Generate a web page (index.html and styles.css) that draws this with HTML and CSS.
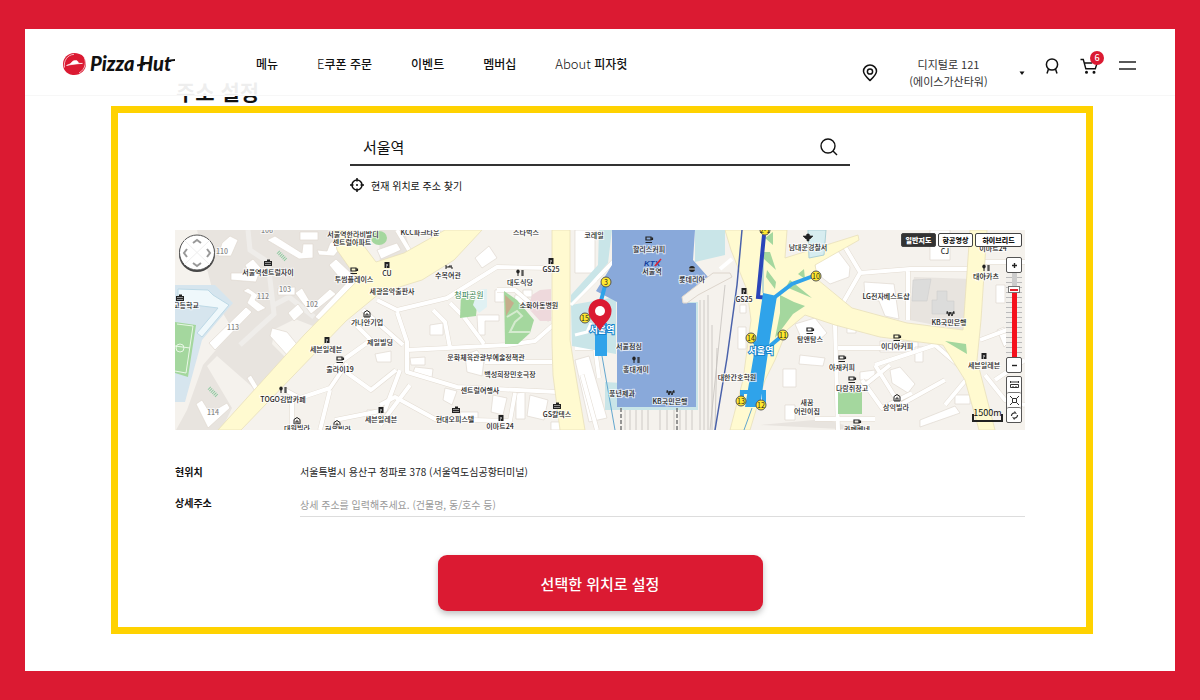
FILE: index.html
```html
<!DOCTYPE html>
<html lang="ko">
<head>
<meta charset="utf-8">
<meta name="viewport" content="width=device-width, initial-scale=1">
<title>주소 설정 - Pizza Hut</title>
<link rel="stylesheet" href="styles.css">
</head>
<body>
<div class="page">
  <header class="header">
    <a class="logo" href="#" aria-label="Pizza Hut">
      <svg width="114" height="26" viewBox="0 0 114 26">
        <path d="M12 2C6 2 1 7 1 13c0 2 .4 4 1.500 6C5 23 9 24 12 24c7 0 12-5 12-11 0-2-1-5-2-7C19 3 16 2 12 2Z" fill="#db1a32"/>
        <path d="M2.500 16.500C1.500 10 5 4 12 3.300M21 4c4 6 3 14-4 18" fill="none" stroke="#fff" stroke-width=".7"/>
        <path d="M4.500 14.500c2.500-1 4-1.500 5.500-3.500 1-1.200 2.200-1.400 3.800-1.400 1.400 0 1.900.6 2.300 1.700.5 1 2 1.300 4.400 1.100-4.500.3-10 .8-16 2.100Z" fill="#fff" stroke="#fff" stroke-width=".6"/>
        <text class="wordmark" x="28" y="20">Pizza Hut</text>
        <path d="M75 14.500l8-1.500M104 10.500c3-1 6-1.500 9-1.500" fill="none" stroke="#111" stroke-width="1.800"/>
      </svg>
    </a>
    <nav class="nav">
      <a href="#">메뉴</a>
      <a href="#"><span class="thin">E</span>쿠폰 주문</a>
      <a href="#">이벤트</a>
      <a href="#">멤버십</a>
      <a href="#"><span class="thin">About</span> 피자헛</a>
    </nav>
    <div class="tools">
      <button class="location" type="button">
        <svg width="16" height="18" viewBox="0 0 16 18" fill="none" stroke="#111" stroke-width="1.500"><path d="M8 16.500C4.500 13.200 1.500 10.500 1.500 7.300a6.500 6.300 0 0 1 13 0c0 3.200-3 5.900-6.500 9.200Z"/><circle cx="8" cy="7.500" r="2.600"/></svg>
        <span class="location-text">디지털로 121<br>(에이스가산타워)</span>
        <svg width="6" height="4" viewBox="0 0 6 4"><path d="M.5.5h5L3 4Z" fill="#111"/></svg>
      </button>
      <button class="icon-button" type="button" aria-label="내 정보">
        <svg width="14" height="18" viewBox="0 0 14 18" fill="none" stroke="#111" stroke-width="1.500"><circle cx="7" cy="7.500" r="5.600"/><path d="M3.500 12 2 16.500M10.500 12l1.500 4.500"/></svg>
      </button>
      <button class="icon-button cart" type="button" aria-label="장바구니">
        <svg width="18" height="18" viewBox="0 0 18 18" fill="none" stroke="#111" stroke-width="1.400"><path d="M.5 2.500h2.800l2.500 9.300h9.500l1.900-6M4.300 6h8"/><circle cx="6.500" cy="15.300" r=".8" fill="#111"/><circle cx="14" cy="15.300" r=".8" fill="#111"/></svg>
        <span class="badge">6</span>
      </button>
      <button class="icon-button" type="button" aria-label="전체 메뉴">
        <svg width="17" height="18" viewBox="0 0 17 18"><path d="M0 5h17M0 12h17" stroke="#222" stroke-width="1.600"/></svg>
      </button>
    </div>
  </header>

  <main class="main">
    <h1 class="title">주소 설정</h1>
    <section class="panel">
      <form class="search">
        <div class="search-row">
          <input class="search-input" type="text" value="서울역" aria-label="주소 검색">
          <button class="icon-button" type="button" aria-label="검색">
            <svg width="18" height="18" viewBox="0 0 18 18" fill="none" stroke="#111" stroke-width="1.400"><circle cx="8" cy="8" r="7"/><path d="m13 13 4 4"/></svg>
          </button>
        </div>
        <button class="locate" type="button">
          <svg width="14" height="14" viewBox="0 0 14 14" fill="none" stroke="#111" stroke-width="1.500"><circle cx="7" cy="7" r="5"/><path d="M7 0v3.500M7 10.500V14M0 7h3.500M10.500 7H14"/><circle cx="7" cy="7" r="1" fill="#111" stroke="none"/></svg>
          현재 위치로 주소 찾기
        </button>
      </form>

      <div class="map">
        <svg class="map-canvas" viewBox="0 0 850 200" preserveAspectRatio="xMidYMid slice" role="img" aria-label="서울역 지도">
          <defs>
            <g id="cup"><path d="M-3-3h5v3h-5ZM2-2h1.500v1.500H2M-3.500 2.500h6.500" fill="none" stroke="#222" stroke-width="1.200"/></g>
            <g id="shop"><path d="M-2.500-3h5v6h-5Z" fill="#222"/><path d="M-1 0h2M-1 2h1" stroke="#fff"/></g>
            <g id="food"><path d="M-2-3v6M2-3v6M3-3v6" stroke="#222"/><ellipse cx="-2" cy="-1.500" rx="1.700" ry="2" fill="#222"/></g>
            <g id="home"><path d="M-3 3v-4.500L0-3.500l3 2V3ZM-1 3V0h2v3" fill="none" stroke="#222"/></g>
            <g id="tower"><path d="M-4 3v-5h3v-1.500h3V-2h2v5Z" fill="#222"/><path d="M-3-.5h6M-3 1.500h6" stroke="#fff" stroke-width=".5"/></g>
            <g id="streets" fill="none" stroke-linejoin="round">
              <path d="M202 70l20 10 50-12 50-31 55 1M222 82l10 30v30l50 15 60 3 40 2M232 120l100-5 28-4 17-15h13M258 80l12 12 5 26M275 73l14 14 20 27M322 60h18l35 30M310 132h67M205 175l15-8 40 22 75 2 5-28"/>
              <path d="M188 80l40 35M176 90l20 20-35 25 35 25 25-20M110 160l15 8 30-10 17-25M117 172v28M145 200l10-40M160 190l50-10 15-40M205 195l30-40M222 0l15 25M262 0l8 15"/>
              <path d="M395 75l45-45M400 105l8-2 4-10M400 118h20l4 30M407 145l15 55"/>
              <path d="M665 78l20-35 50-4h60M733 40v50M685 42l-15-25M660 95l3 105M663 118h50l15-10M700 135l60-20 35 30-25 30M700 135l25 40 45-25M690 155l25-20M687 150l20 28 30-15M640 189h60M810 32h40M805 110l40-15M820 150l30-20M810 145l20 25 20 5"/>
            </g>
          </defs>
          <rect width="850" height="200" fill="#f5f2ed"/>

          <g fill="#e8e4df">
            <path d="M22 0h145l22 30-8 25-43 41-18-7-20 10-3 15 15 15-30 32-40-35-10 10 25 42-25 52H0v-28l12-22 16-45 30-35-18-30Z"/>
            <path d="M204 0h25l8 25-32 14Z"/>
            <path d="m739 47 58 2-5 52-58-11Z"/>
            <path d="M585 195l65-6 35 11Z"/>
          </g>
          <path d="M0 55h40l18 18-31 37-17 62H0Z" fill="#d6e5ee"/>
          <path d="m3 59 30 1 5 5 16 10-27 32-5-4 21-25-40-5Z" fill="#eff8fb" stroke="#bdd9e6"/>
          <path d="m0 92 21 3-8 52-13-4Z" fill="#a4d79e"/>
          <path d="m2 94 16 2-7 47-11-2M0 116l15 2" fill="none" stroke="#e9f7e6"/><circle cx="5" cy="118" r="4" fill="none" stroke="#e9f7e6"/>

          <g fill="none" stroke="#efedea" stroke-width="5"><path d="M73 0l2 20 18 12 6 52-34 31M99 75l15-8 25 20"/></g>
          <g fill="#fff" stroke="#e0d9d0" stroke-width=".7">
            <path d="m47 13 8-7 8 4-7 16H43ZM56 50v-7h18l-4-8 8-6 8 9-5 14ZM73 58l10 7-3 5 11 8-8 4-11-9 4-8-8-4ZM71 77l6 5-37 38-6-7ZM103 58l17-1v8h-17ZM120 63l7-5 10 17 18-16 6 5-25 20ZM113 83l10-9 6 8-10 9ZM97 98l15 4 13 16-12 8-18-20ZM92 10l8-4 27 17 1-9h10v14l-14 1ZM142 20l10 1 3-8 8-5 4 8-8 10-15-1ZM154 35l7-6 17 16-10 7ZM140 87l35-38 8 6-35 38ZM72 148l4-3 9 15-4 3ZM27 170l8 13 17-10 3 5-22 20-12-24Z"/>
            <path d="M125 2h18v8h-18ZM200 124l16-3v11h-14ZM192 180h14v8h-14ZM180 0l20-3v12l-16-2ZM202 20l20-7 4 7-20 9ZM212 29l11-2-2 8-10 2ZM300 28l14-12 8 12-15 10ZM320 60l9-1v13h-9ZM340 65h8v-5h9v7h-5v7h-13ZM302 85h22v6h-14v14h-7ZM255 95l13-2v12h-13ZM235 128l15-1v8h-14ZM240 137l18 2-1 9-20-3ZM270 158l12 3-5 14-9-5ZM285 182h18v8h-18ZM318 165l14 3-4 17-12-3ZM341 163l9-1v27h-9ZM355 165l18 5-4 20-17-4ZM376 192h14v8h-14ZM400 0h20v43h-20ZM400 130l14-4 18 62-18 4ZM290 125l12-5 7 10-2 16-15-4Z"/>
            <path d="m640 27 20-10 15 20-1 10-19 7-15-12ZM689 52l30 2 5 35-14-3-6-15-14-3ZM755 0h20v30h-20ZM620 94l20-6 12 15-10 9-15-2ZM625 125l25 3-2 8-24-2ZM672 91h9v12h-9ZM705 111l38 1v10h-38ZM740 117h8v15h-8ZM608 139h13v18h-13ZM610 175h10v15h-10ZM715 140l10-3 15 17-7 9-16-10ZM685 142l15-2v10h-15ZM780 165h15v9h-15ZM822 100l7-3 5 15-5 5ZM821 55h9v18h-9ZM745 190l35-14 5 7-40 14ZM563 97h8v22h-8ZM565 75h6v8h-6Z"/>
          </g>
          <g fill="#dcdcdb" stroke="#cfcfcf" stroke-width=".6"><path d="m738 50 18-1-4 22h-15ZM762 61h10v10h7v13h-22V70h5Z"/></g>

          <use href="#streets" class="street-edge"/>
          <use href="#streets" class="street-fill"/>

          <g fill="#fffad0" stroke="#e8dfba" stroke-width=".8">
            <path d="M377 0h18v110l4 25 11 65h-25l-7-55-1-32Z"/>
            <path d="M550 0h62l-2 28 73-23 1 5-44 25 3 15 34 28 55 15 56 7 7-100h17l-6 90-4 40 18 70h-16l-14-50-22-35-63-8-45-12-30-10-18 15-12 30-10 20-15 50h-20l13-50 8-60-4-30-16-40Z"/>
            <path d="m43 200 86-95 54-55-21-30-4-20h19l24 32 28-9L270 0h37l-28 30-32 20-42 13-34 28L66 200Z"/>
          </g>

          <path d="m286 64 11-3 6 3-2 22-16 2Z" fill="#a4d79e"/><path d="m303 60 9-1v18l-8 6-6-8Z" fill="#e0f1f3"/>
          <path d="m329 61 13 9 17 20-4 13-12 11h-13Z" fill="#a4d79e"/><path d="m330 65 9 8-8 13Z" fill="#c5ad8c"/><path d="m332 87 10-6 5 5-7 6-5 10 20 0" fill="none" stroke="#d5ebcf" stroke-width="2"/>
          <path d="m357 65 8-5 11-1v32h-11l-12-13Z" fill="#eed9dc"/>
          <ellipse cx="204" cy="8" rx="8" ry="7" fill="#a4d79e"/>
          <g fill="none" stroke="#8dcaa0" stroke-width="4" stroke-dasharray="1 1"><path d="m103 22 8 8M34 158l8 8"/></g>

          <path d="M396 75l37-42 4-33h-13l-1 35-27 30ZM396 75l45-8v57l-44-8ZM430 152v28h93V72h-12v85ZM520 0h30v25l-30 7Z" fill="#c9e5e8"/>
          <path d="M396 75l25-25M400 105l12-3 4-9" fill="none" stroke="#fff" stroke-width="3"/>
          <g fill="none" stroke="#c4c0bd" stroke-width=".8"><path d="M450 180v20M455 180v20M461 180v20M467 180v20M473 180v20M485 180v20M492 180v20M499 180v20M505 180v20M511 180v20M517 180v20M525 70v130M529 70v130M533 65v135M537 95v105M542 118l-2 82M550 55l-15 145"/></g>
          <path d="M446 178v22M502 178v22" stroke="#777" stroke-width="1.500" stroke-dasharray="4 2"/>
          <path d="M437 0h83l-2 30 15 17-26 20 1 6h13v104h-79V72l-21-11 16-26Z" fill="#89a9da"/>
          <path d="m507 67 31-24h17l2 4-34 18-11 8h-4Z" fill="#f5f2ed" stroke="#ddd5cc"/>
          <path d="m545 39 12-10" stroke="#fff" stroke-width="4"/>
          <path d="M567 0l-5 55-10 73-12 72" fill="none" stroke="#4a62ab" stroke-width="1.500"/>

          <path d="m605 65 14 7 11 4-12 8-18 24 5-25ZM615 50l22 18-26-11ZM623 44l6-5 1 10ZM770 111l21 3 1 10ZM663 162h24v22h-24ZM587 22l8 0 6 18-12-11ZM592 40l9 12-1 7-9-12ZM590 8l8-6 0 13Z" fill="#a4d79e"/>
          <path d="M633 0h18l-2 25-15 3Z" fill="#d7edf0" stroke="#add0d5"/>
          <path d="M588 63V0" stroke="#7dbbd7"/>
          <path d="m589 5-6 62 10 1" fill="none" stroke="#2b45b9" stroke-width="4"/>
          <path d="m588 63 14 3-6 36-11 75h-15l11-65ZM420 93h12v33h-12Z" fill="#2fa3ea"/>
          <path d="m600 67 17-13 24-9M595 116l13-11M567 171v-9h22v12M576 108l10 12M431 52l-8 30" fill="none" stroke="#2fa3ea" stroke-width="4"/>
          <path d="m427 126 13 74M577 178l-8 22" stroke="#62a6ce"/>

          <g class="exits">
            <circle cx="590" cy="0" r="5"/><circle cx="431" cy="52" r="5"/><circle cx="410" cy="88" r="5"/><circle cx="576" cy="108" r="5"/><circle cx="608" cy="105" r="5"/><circle cx="566" cy="171" r="5"/><circle cx="586" cy="175" r="5"/><circle cx="641" cy="46" r="5"/>
          </g>
          <g class="exit-numbers">
            <text x="590" y="3">2-1</text><text x="431" y="55">3</text><text x="410" y="91">15</text><text x="576" y="111">14</text><text x="608" y="108">11</text><text x="566" y="174">13</text><text x="586" y="178">12</text><text x="641" y="49">10</text>
          </g>

          <use href="#tower" x="93" y="33"/><use href="#cup" x="179" y="41"/><use href="#shop" x="212" y="35"/><use href="#home" x="192" y="84"/><use href="#shop" x="152" y="110"/><use href="#cup" x="165" y="130"/><use href="#food" x="108" y="160"/><use href="#home" x="122" y="191"/><use href="#home" x="162" y="194"/><use href="#shop" x="206" y="180"/><use href="#tower" x="281" y="180"/><use href="#shop" x="326" y="188"/><use href="#tower" x="382" y="176"/><use href="#shop" x="376" y="31"/><use href="#food" x="345" y="43"/><use href="#tower" x="5" y="68"/>
          <use href="#cup" x="474" y="10"/><use href="#food" x="461" y="130"/><use href="#shop" x="569" y="61"/><use href="#cup" x="635" y="101"/><use href="#cup" x="722" y="108"/><use href="#cup" x="667" y="129"/><use href="#cup" x="677" y="150"/><use href="#cup" x="682" y="193"/><use href="#home" x="722" y="168"/><use href="#shop" x="809" y="126"/><use href="#food" x="811" y="38"/>
          <circle cx="517" cy="39" r="3" fill="#222"/><path d="M514 39h6" stroke="#fff" stroke-width=".8"/>
          <path d="M271 35v4M271 37h6v2M274 37v-1h3" fill="none" stroke="#222"/>
          <path d="M628 6h3l1-2h2l1 2h3l-3 3h-1v2h-2V9h-1Z" fill="#222" stroke="#222" stroke-width=".6"/>
          <path d="m492 160 2 5 1-4 2 4 2-5M491 162h9M772 81l2 5 1-4 2 4 2-5M771 83h9" fill="none" stroke="#222"/>

          <g class="labels">
            <text x="93" y="45">서울역센트럴자이</text><text x="178" y="7">서울역한라비발디</text><text x="177" y="15">센트럴아파트</text><text x="245" y="5">KCC파크타운</text><text x="351" y="5">스타벅스</text><text x="419" y="8">코레일</text>
            <text x="179" y="52">투썸플레이스</text><text x="212" y="46">CU</text><text x="217" y="64">세광음악출판사</text><text x="192" y="95">가나안기업</text><text x="205" y="115">제일빌딩</text><text x="151" y="122">세븐일레븐</text><text x="165" y="142">줄라이19</text><text x="108" y="172">TOGO김밥카페</text><text x="122" y="201">대원빌라</text><text x="163" y="202">현우빌라</text><text x="206" y="192">세븐일레븐</text><text x="11" y="78">고등학교</text>
            <text x="273" y="48">수복여관</text><text x="345" y="55">대도식당</text><text x="376" y="42">GS25</text><text x="364" y="78">소화아동병원</text><text x="311" y="130">문화체육관광부예술정책관</text><text x="335" y="147">백성희장민호극장</text><text x="305" y="163">센트럴여행사</text><text x="280" y="192">현대오피스텔</text><text x="325" y="199">이마트24</text><text x="382" y="187">GS칼텍스</text>
            <text x="474" y="22">할리스커피</text><text x="477" y="44">서울역</text><text x="517" y="52">롯데리아</text><text x="454" y="119">서울점심</text><text x="461" y="142">홍대개미</text><text x="447" y="166">풍년제과</text><text x="495" y="174">KB국민은행</text><text x="569" y="72">GS25</text><text x="562" y="150">대한간호학원</text>
            <text x="633" y="20">남대문경찰서</text><text x="711" y="69">LG전자베스트샵</text><text x="635" y="112">탐앤탐스</text><text x="722" y="119">이디야커피</text><text x="667" y="140">아재커피</text><text x="677" y="161">다람쥐창고</text><text x="632" y="175">새꿈</text><text x="632" y="184">어린이집</text><text x="721" y="180">삼익빌라</text><text x="682" y="202">카페베네</text><text x="774" y="95">KB국민은행</text><text x="770" y="24">CJ</text><text x="818" y="21">이마트24</text><text x="811" y="49">태야카츠</text><text x="809" y="138">세븐일레븐</text>
          </g>
          <g class="labels lots"><text x="47" y="24">110</text><text x="92" y="3">106</text><text x="110" y="62">103</text><text x="88" y="69">112</text><text x="137" y="77">102</text><text x="58" y="100">113</text><text x="38" y="185">114</text></g>
          <text class="park" x="294" y="68">청파공원</text>
          <text class="station" x="427" y="103">서울역</text><text class="station" x="586" y="124">서울역</text>
          <text class="ktx" x="477" y="36">KTX</text><path d="m480 36 6-7" stroke="#e32332" stroke-width="1.500"/>
          <path d="M425 101c-3-7-11.500-11-11.500-20a11.500 12 0 0 1 23 0c0 9-8.500 13-11.500 20Z" fill="#db1a32"/><circle cx="425" cy="81" r="5" fill="#fff"/>
        </svg>

        <button class="compass" type="button" aria-label="지도 이동">
          <svg width="38" height="40" viewBox="0 0 38 40"><circle cx="19" cy="21" r="18" fill="#444"/><circle cx="19" cy="19.500" r="17.500" fill="#fff" stroke="#555"/><path d="M6.500 7.500l25 24M31.500 7.500l-25 24" stroke="#eee"/><path d="m15 10 4-3 4 3M15 30l4 3 4-3M9 16l-3 4 3 4M29 16l3 4-3 4" fill="none" stroke="#999" stroke-width="2"/></svg>
        </button>
        <div class="map-types">
          <button class="map-type active" type="button">일반지도</button>
          <button class="map-type" type="button">항공영상</button>
          <button class="map-type wide" type="button">하이브리드</button>
        </div>
        <div class="zoom">
          <button class="zoom-button" type="button" aria-label="확대"><svg width="7" height="7" viewBox="0 0 7 7"><path d="M1 3.500h5M3.500 1v5" stroke="#222" stroke-width="1.400"/></svg></button>
          <div class="zoom-track"><input class="zoom-range" type="range" min="0" max="100" value="83" aria-label="지도 확대 수준"></div>
          <button class="zoom-button" type="button" aria-label="축소"><svg width="7" height="7" viewBox="0 0 7 7"><path d="M1 3.500h5" stroke="#222" stroke-width="1.400"/></svg></button>
          <div class="map-tools">
            <button class="tool" type="button" aria-label="거리 재기"><svg width="9" height="9" viewBox="0 0 9 9" fill="none" stroke="#333"><path d="M.5 1v2M8.500 1v2M.5 2h8M.5 4.500h8v3h-8ZM3 6v1.500M6 6v1.500"/></svg></button>
            <button class="tool" type="button" aria-label="면적 재기"><svg width="9" height="9" viewBox="0 0 9 9" fill="none" stroke="#333"><path d="M2.500 2.500h4v4h-4ZM0 0l2.500 2.500M9 0 6.500 2.500M0 9l2.500-2.500M9 9 6.500 6.500"/></svg></button>
            <button class="tool" type="button" aria-label="초기화"><svg width="9" height="9" viewBox="0 0 9 9" fill="none" stroke="#333" stroke-width="1.200"><path d="M1.500 5a3 3 0 0 1 4-3L4.500.5M7.500 4a3 3 0 0 1-4 3l1 1.500"/></svg></button>
          </div>
        </div>
        <div class="scale"><span>1500m</span></div>
      </div>

      <form class="details">
        <div class="detail-row">
          <span class="detail-label">현위치</span>
          <span class="detail-value">서울특별시 용산구 청파로 378 (서울역도심공항터미널)</span>
        </div>
        <div class="detail-row">
          <label class="detail-label" for="detail-address">상세주소</label>
          <input class="detail-input" id="detail-address" type="text" placeholder="상세 주소를 입력해주세요. (건물명, 동/호수 등)">
        </div>
        <button class="submit" type="button">선택한 위치로 설정</button>
      </form>
    </section>
  </main>
</div>
</body>
</html>
```
FILE: styles.css
```css
* { box-sizing: border-box; }

body {
  margin: 0;
  padding: 29px 25px;
  background: #db1a32;
  color: #111;
  font-family: "Noto Sans CJK KR", sans-serif;
  font-size: 10px;
}

button, input { font: inherit; color: inherit; }

button {
  padding: 0;
  border: 0;
  background: none;
  cursor: pointer;
}

svg { display: block; }

.page {
  min-height: calc(100vh - 58px);
  background: #fff;
}

.header {
  position: relative;
  z-index: 1;
  display: flex;
  align-items: center;
  min-height: 67px;
  padding: 4px 39px 0 37px;
  border-bottom: 1px solid #f7f7f7;
  background: rgba(255, 255, 255, .93);
}

.wordmark {
  font: italic 900 20px Lato, sans-serif;
  fill: #111;
}

.nav {
  display: flex;
  gap: 39px;
  margin-left: 80px;
  font-size: 12px;
  font-weight: 500;
  line-height: 18px;
}

.nav a { color: #111; text-decoration: none; white-space: nowrap; }
.thin { font-size: 13px; font-weight: 300; }

.tools {
  display: flex;
  align-items: center;
  margin-left: auto;
}

.location {
  display: flex;
  align-items: center;
  margin: 17px 20px 0 0;
}

.location-text {
  width: 141px;
  font-size: 11px;
  line-height: 17px;
  color: #333;
}

.icon-button {
  position: relative;
  flex: none;
}

.tools .icon-button { margin-top: 3px; }
.tools .icon-button + .icon-button { margin-left: 21px; }

.badge {
  position: absolute;
  top: -6px;
  right: -6px;
  width: 14px;
  height: 14px;
  border-radius: 50%;
  background: #db1a32;
  color: #fff;
  font-size: 9px;
  font-weight: 500;
  line-height: 14px;
}

.main { padding: 0 82px 37px 86px; }

.title {
  margin: -16px 0 2px;
  padding-left: 65px;
  font-size: 21px;
  font-weight: 700;
  line-height: 22px;
  padding-bottom: 2px;
}

.panel {
  padding: 16px 61px 16px 57px;
  border: 7px solid #ffd200;
}

.search {
  max-width: 500px;
  margin: 0 auto;
}

.search-row {
  display: flex;
  align-items: center;
  padding: 0 12px 0 13px;
  border-bottom: 2px solid #333;
}

.search-input {
  flex: 1;
  min-width: 0;
  height: 35px;
  padding: 0;
  border: 0;
  outline: 0;
  background: none;
  font-size: 15px;
}

.locate {
  display: flex;
  align-items: center;
  gap: 7px;
  height: 20px;
  margin-top: 9px;
}

.map {
  position: relative;
  margin-top: 35px;
}

.map-canvas {
  width: 100%;
  height: 200px;
}

.street-edge { stroke: #e3dcd2; stroke-width: 5px; }
.street-fill { stroke: #fff; stroke-width: 4px; }

.labels text, .park, .station, .ktx, .exit-numbers text { text-anchor: middle; }

.labels text {
  font-size: 7px;
  font-weight: 500;
  fill: #222;
  stroke: rgba(255, 255, 255, .7);
  stroke-width: 2px;
  paint-order: stroke;
}

.labels.lots text { fill: #888; }

.park {
  font-size: 8px;
  fill: #34824a;
  stroke: #fff;
  stroke-width: 2px;
  paint-order: stroke;
}

.station {
  font-size: 9px;
  font-weight: 700;
  fill: #fff;
  stroke: #1683cb;
  stroke-width: 2px;
  paint-order: stroke;
}

.ktx {
  font: italic 900 8px "Liberation Sans", sans-serif;
  fill: #123f9c;
}

.exits circle { fill: #ffe92f; stroke: #555; }
.exit-numbers text { font-size: 7px; fill: #222; }

.compass {
  position: absolute;
  top: 3px;
  left: 3px;
}

.map-types {
  position: absolute;
  top: 3px;
  right: 3px;
  display: flex;
  gap: 2px;
}

.map-type {
  width: 35px;
  height: 14px;
  border: 1px solid #444;
  border-radius: 2px;
  background: #fff;
  font-size: 7px;
  font-weight: 900;
  line-height: 12px;
  white-space: nowrap;
}

.map-type.wide { width: 47px; }
.map-type.active { background: #333; color: #fff; }

.zoom {
  position: absolute;
  top: 27px;
  right: 3px;
  width: 16px;
}

.zoom-button, .tool {
  display: grid;
  place-items: center;
  width: 100%;
  height: 16px;
  border: 1px solid #555;
  border-radius: 2px;
  background: #fff;
}

.zoom-track {
  height: 84px;
  background: repeating-linear-gradient(#f2f0ec 0 4px, #bbb 4px 5px);
}

.zoom-range {
  display: block;
  width: 12px;
  height: 84px;
  margin: 0 auto;
  appearance: none;
  writing-mode: vertical-lr;
  direction: rtl;
  background: linear-gradient(#ccc 0 18px, #f5111d 18px) center / 5px 100% no-repeat;
}

.zoom-range::-webkit-slider-thumb {
  appearance: none;
  width: 12px;
  height: 7px;
  border: 1px solid #777;
  background: linear-gradient(#e2202a, #e2202a) center / 8px 2px no-repeat #fff;
}

.map-tools {
  margin-top: 3px;
  border: 1px solid #555;
  border-radius: 2px;
}

.tool { height: 15px; border: 0; }
.tool + .tool { border-top: 1px solid #777; }

.scale {
  position: absolute;
  right: 22px;
  bottom: 8px;
  display: flex;
  justify-content: center;
  width: 31px;
  background: linear-gradient(#222, #222) left bottom / 2px 6px no-repeat, linear-gradient(#222, #222) right bottom / 2px 6px no-repeat;
  border-bottom: 2px solid #222;
  font-size: 9px;
  line-height: 14px;
}

.details {
  display: grid;
  gap: 11px;
  margin-top: 32px;
}

.detail-row {
  display: grid;
  grid-template-columns: 125px 1fr;
  align-items: start;
  line-height: 20px;
}

.detail-label { font-weight: 700; }
.detail-value { color: #222; }

.detail-input {
  height: 24px;
  padding: 0;
  border: 0;
  border-bottom: 1px solid #ddd;
  outline: 0;
  background: none;
}

.detail-input::placeholder { color: #999; }

.submit {
  justify-self: center;
  width: 325px;
  max-width: 100%;
  height: 56px;
  margin-top: 27px;
  border-radius: 9px;
  background: #db1a32;
  box-shadow: 0 3px 6px rgba(0, 0, 0, .25);
  color: #fff;
  font-size: 15px;
  font-weight: 500;
}
```
